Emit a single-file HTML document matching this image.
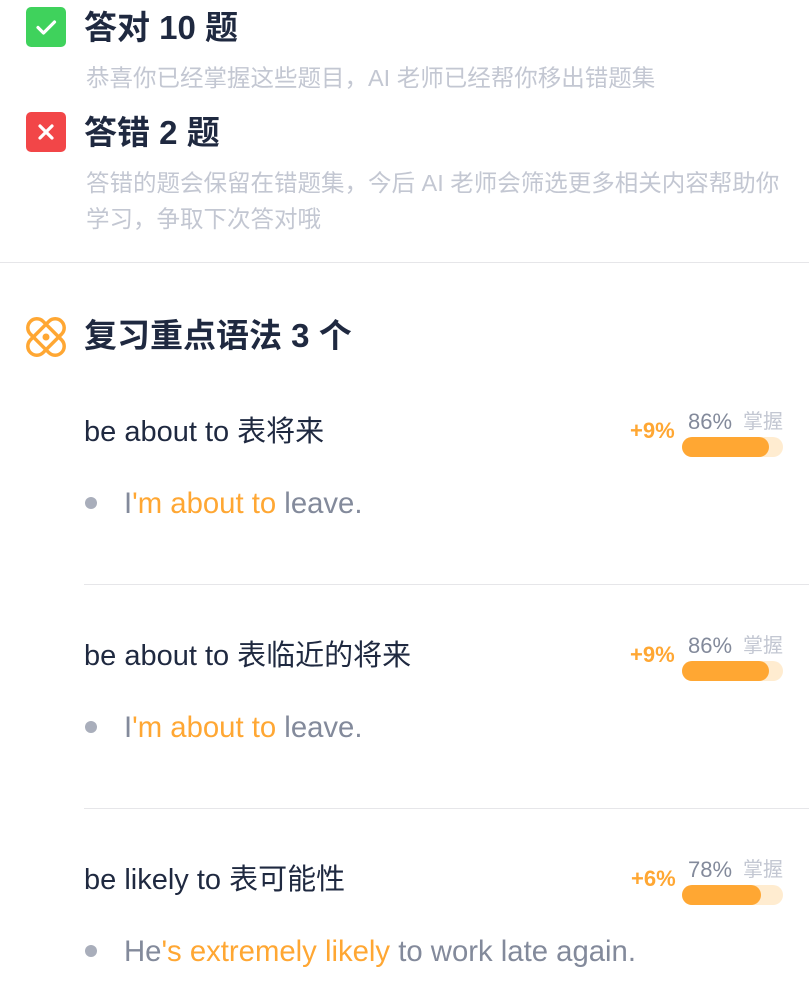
<!DOCTYPE html>
<html><head><meta charset="utf-8"><style>
*{margin:0;padding:0;box-sizing:border-box}
body{width:809px;height:981px;background:#fff;font-family:"Liberation Sans","Noto Sans CJK SC",sans-serif;position:relative;overflow:hidden}
.a{position:absolute;white-space:nowrap;line-height:40px}
.t{font-size:33px;font-weight:bold;color:#1f2940}
.s{font-size:23.5px;color:#c3c7d2}
.h{font-size:29px;color:#1f2940}
.e{font-size:29.3px;color:#838a9b}
.o{color:#ffa733}
.dot{width:12px;height:12px;border-radius:50%;background:#a9aebb}
.pl{font-size:22px;font-weight:bold;color:#ffa733}
.pc{font-size:22px;color:#838a9b}
.pm{font-size:20px;color:#c3c7d2}
.bar{width:101px;height:20px;border-radius:10px;background:#ffecd0}
.bar i{display:block;height:20px;border-radius:10px;background:#ffa733}
.hr{height:1px;background:#e6e6e9}
</style></head><body>
<div class="a" style="left:26px;top:7px;width:40px;height:40px;border-radius:5px;background:#3fd25c">
<svg width="40" height="40"><path d="M12 20.5l5.5 5.5L28.5 15" stroke="#fff" stroke-width="3.2" fill="none" stroke-linecap="round" stroke-linejoin="round"/></svg></div>
<div class="a t" style="left:84px;top:8px">答对 10 题</div>
<div class="a s" style="left:86px;top:58px">恭喜你已经掌握这些题目，AI 老师已经帮你移出错题集</div>
<div class="a" style="left:26px;top:112px;width:40px;height:40px;border-radius:5px;background:#f24648">
<svg width="40" height="40"><path d="M14 14l12 12M26 14L14 26" stroke="#fff" stroke-width="3.2" stroke-linecap="round"/></svg></div>
<div class="a t" style="left:84px;top:113px">答错 2 题</div>
<div class="a s" style="left:86px;top:163px">答错的题会保留在错题集，今后 AI 老师会筛选更多相关内容帮助你</div>
<div class="a s" style="left:86px;top:199px">学习，争取下次答对哦</div>
<div class="a hr" style="left:0;top:262px;width:809px"></div>
<svg class="a" style="left:25px;top:316px" width="42" height="42" viewBox="0 0 42 42">
<g fill="none" stroke="#ffa733" stroke-width="3.5">
<rect x="12" y="-1" width="18" height="44" rx="9" transform="rotate(45 21 21)"/>
<rect x="12" y="-1" width="18" height="44" rx="9" transform="rotate(-45 21 21)"/></g>
<circle cx="21" cy="21" r="3.5" fill="#ffa733"/></svg>
<div class="a t" style="left:84px;top:316px">复习重点语法 3 个</div>

<div class="a h" style="left:84px;top:412px">be about to 表将来</div>
<div class="a pl" style="left:630px;top:411px">+9%</div>
<div class="a pc" style="left:688px;top:402px">86%</div>
<div class="a pm" style="left:743px;top:402px">掌握</div>
<div class="a bar" style="left:682px;top:437px"><i style="width:87px"></i></div>
<div class="a dot" style="left:85px;top:497px"></div>
<div class="a e" style="left:124px;top:484px">I<span class="o">'m about to</span> leave.</div>
<div class="a hr" style="left:84px;top:584px;width:725px"></div>

<div class="a h" style="left:84px;top:636px">be about to 表临近的将来</div>
<div class="a pl" style="left:630px;top:635px">+9%</div>
<div class="a pc" style="left:688px;top:626px">86%</div>
<div class="a pm" style="left:743px;top:626px">掌握</div>
<div class="a bar" style="left:682px;top:661px"><i style="width:87px"></i></div>
<div class="a dot" style="left:85px;top:721px"></div>
<div class="a e" style="left:124px;top:708px">I<span class="o">'m about to</span> leave.</div>
<div class="a hr" style="left:84px;top:808px;width:725px"></div>

<div class="a h" style="left:84px;top:860px">be likely to 表可能性</div>
<div class="a pl" style="left:631px;top:859px">+6%</div>
<div class="a pc" style="left:688px;top:850px">78%</div>
<div class="a pm" style="left:743px;top:850px">掌握</div>
<div class="a bar" style="left:682px;top:885px"><i style="width:79px"></i></div>
<div class="a dot" style="left:85px;top:945px"></div>
<div class="a e" style="left:124px;top:932px">He<span class="o">'s extremely likely</span> to work late again.</div>
</body></html>
